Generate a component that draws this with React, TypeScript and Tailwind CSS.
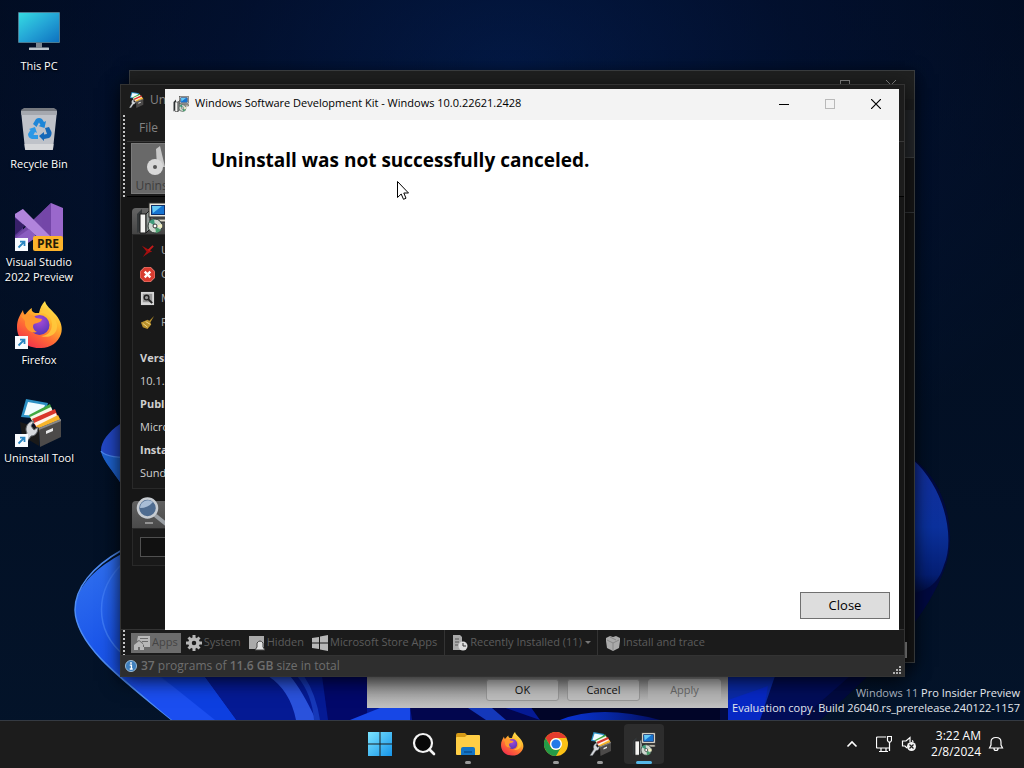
import type { ReactNode } from 'react';

const SEGOE = "font-['Open_Sans','Noto_Sans',sans-serif]";

function Wallpaper() {
  return (
    <svg className="absolute inset-0 h-full w-full" viewBox="0 0 1024 720" preserveAspectRatio="none" aria-hidden="true">
      <defs>
        <radialGradient id="sky" cx="0.5" cy="0.1" r="0.62">
          <stop offset="0" stopColor="#052668" />
          <stop offset="0.45" stopColor="#03153c" />
          <stop offset="1" stopColor="#020d1e" />
        </radialGradient>
        <linearGradient id="skyLow" x1="0" y1="0" x2="0" y2="1">
          <stop offset="0" stopColor="#010a1e" stopOpacity="0.5" />
          <stop offset="0.5" stopColor="#03122a" stopOpacity="0.5" />
          <stop offset="1" stopColor="#04162e" stopOpacity="0.7" />
        </linearGradient>
        <linearGradient id="petal" x1="0" y1="0" x2="1" y2="1">
          <stop offset="0" stopColor="#3b7df0" />
          <stop offset="0.35" stopColor="#1b56ea" />
          <stop offset="1" stopColor="#0c36dc" />
        </linearGradient>
        <linearGradient id="petalR" x1="0" y1="0" x2="0" y2="1">
          <stop offset="0" stopColor="#142f9a" />
          <stop offset="0.5" stopColor="#0b319c" />
          <stop offset="0.85" stopColor="#051f74" />
          <stop offset="1" stopColor="#020b38" />
        </linearGradient>
        <linearGradient id="stem" x1="0" y1="0" x2="1" y2="0">
          <stop offset="0" stopColor="#0a34d8" />
          <stop offset="0.5" stopColor="#0626a0" />
          <stop offset="1" stopColor="#030c5c" />
        </linearGradient>
      </defs>
      <rect width="1024" height="720" fill="url(#sky)" />
      <rect width="1024" height="720" fill="url(#skyLow)" />
      <path d="M120 424C108 432 101 442 101 450C102 458 112 470 120 482L240 560V400Z" fill="#2348c6" />
      <path d="M101 452Q104 457 130 458V490L120 482C112 470 104 462 101 452Z" fill="#1e63cf" />
      <path d="M101 451Q104 457 130 458" fill="none" stroke="#4a86ee" strokeWidth="1.5" />
      <path d="M220 520C130 540 76 572 75 610C76 645 120 678 172 720H420V520Z" fill="url(#petal)" />
      <path d="M122 550C92 567 75 588 75 610C76 645 120 678 172 720" fill="none" stroke="#4f8cf2" strokeWidth="1.5" />
      <path d="M124 562C94 590 94 630 124 655" fill="none" stroke="#3b78f6" strokeWidth="1.5" />
      <path d="M120 672C136 690 155 706 172 720H230L150 672Z" fill="#1b4ef0" />
      <path d="M204 676L236 720H720V676Z" fill="#051a94" />
      <path d="M160 676L215 720H236L204 676Z" fill="#0d3fe0" />
      <path d="M268 676Q290 690 296 720H316Q302 690 290 676Z" fill="#2a52dc" />
      <path d="M297 676Q312 694 314 720H320Q316 694 304 676Z" fill="#1638b8" />
      <path d="M322 676L328 720H367V676Z" fill="#02086a" />
      <path d="M350 720L380 708H410V720Z" fill="#1747e6" />
      <path d="M410 706H500L540 720H412Z" fill="#02064e" />
      <path d="M468 708L486 720H506L492 708Z" fill="#1438ba" />
      <path d="M530 706H728V720H540Z" fill="#010528" />
      <path d="M560 720Q600 704 660 720Z" fill="url(#stem)" />
      <path d="M915 460C950 488 957 540 944 570C930 610 890 660 820 720H720V660H900Z" fill="#020a40" />
      <path d="M912 459C946 488 955 540 944 565C938 585 926 592 905 595Z" fill="url(#petalR)" />
      <path d="M728 676H846L800 708L728 720Z" fill="#0a2aa6" />
      <path d="M728 700L768 686L762 720H728Z" fill="#0728c4" />
      <path d="M775 676L760 720H800L850 676Z" fill="#020d58" />
    </svg>
  );
}

function ShortcutArrow() {
  return (
    <g>
      <rect x="0" y="35" width="13" height="13" fill="#f8fbff" />
      <path d="M3.5 44.5L9 39M5 38.6H9.5V43" fill="none" stroke="#2a86c2" strokeWidth="1.8" />
    </g>
  );
}

function ThisPcIcon() {
  return (
    <svg viewBox="0 0 48 48" className="size-12" aria-hidden="true">
      <defs>
        <linearGradient id="screen" x1="0" y1="0" x2="1" y2="1">
          <stop offset="0" stopColor="#35dbe2" />
          <stop offset="0.5" stopColor="#24a5d6" />
          <stop offset="1" stopColor="#0e72c0" />
        </linearGradient>
      </defs>
      <rect x="3" y="5" width="42" height="31" rx="1" fill="#4b7b92" />
      <rect x="4" y="6" width="40" height="29" fill="url(#screen)" />
      <path d="M21 36H27V40.500H21Z" fill="#7c8690" />
      <rect x="14" y="40.500" width="20" height="2.500" rx="0.500" fill="#bcc5cc" />
    </svg>
  );
}

function RecycleBinIcon() {
  return (
    <svg viewBox="0 0 48 48" className="size-12" aria-hidden="true">
      <path d="M6 5L9 3H39L42 5L41 8H7Z" fill="#76797f" />
      <path d="M6 6H42L38 44Q38 45 37 45H11Q10 45 10 44Z" fill="#bfc2c9" />
      <path d="M6 6H42L41.500 10H6.500Z" fill="#a5a8af" />
      <path d="M9.500 39H38.500L38 44Q38 45 37 45H11Q10 45 10 44Z" fill="#d6d7da" />
      <path d="M18 19L21 14Q24 12 27 14L29 17L31 16L29.500 23L23.500 21L25.500 20L24 17.500L21.500 22Z" fill="#1e86d8" />
      <path d="M30 23L34 22L36.500 27Q37 31 34 33L29 34V36L24 31L29 27V29.500L32 29Z" fill="#1668b8" />
      <path d="M14 24L20 22L22 28L20 27L18.500 30H23V34H17Q13 33 13 29L15.500 25Z" fill="#2c98e6" />
    </svg>
  );
}

function VisualStudioIcon() {
  return (
    <svg viewBox="0 0 48 48" className="size-12" aria-hidden="true">
      <path d="M0 11L8 6L8 34L0 38Z" fill="#5c3a94" />
      <path d="M0 34L36 0V18L8 42H0Z" fill="#7448a8" />
      <path d="M36 0L48 5V46H34Z" fill="#9a68cc" />
      <path d="M36 0V46L27 34V9Z" fill="#7446a8" />
      <path d="M0 15L10 23L0 32Z" fill="#38206a" />
      <path d="M8 6L40 38L36 46L0 14V11Z" fill="#b184dc" />
      <path d="M0 36L14 26L22 34L10 42H0Z" fill="#8a5cc0" />
      <rect x="18" y="33" width="30" height="15" rx="2" fill="#fcb32b" />
      <text x="33" y="45" textAnchor="middle" fontSize="12" fontWeight="700" fill="#241b08" fontFamily="Open Sans, sans-serif">PRE</text>
      <ShortcutArrow />
    </svg>
  );
}

function FirefoxArt({ id }: { id: string }) {
  return (
    <g>
      <defs>
        <linearGradient id={id + 'a'} x1="0.8" y1="0" x2="0.2" y2="1">
          <stop offset="0" stopColor="#fff05a" />
          <stop offset="0.35" stopColor="#ffb52c" />
          <stop offset="0.65" stopColor="#ff6a35" />
          <stop offset="1" stopColor="#f0284e" />
        </linearGradient>
        <radialGradient id={id + 'b'} cx="0.5" cy="0.3" r="0.7">
          <stop offset="0" stopColor="#a84bd8" />
          <stop offset="1" stopColor="#5636b8" />
        </radialGradient>
      </defs>
      <path d="M30 0C31 5 36 8 41 14C46 20 48 27 46 33C43 42 34 48 24 47C11 47 2 38 2 26C2 19 5 14 8 9C8 11 9 13 10 14C12 11 15 8 17 7C16 10 18 11 20 12L24 12C25 7 27 3 30 0Z" fill={'url(#' + id + 'a)'} />
      <path d="M24 13C30 10 37 16 37 23C37 31 32 35 26 35C34 38 43 33 42 24C41 17 36 14 33 9C30 8 26 10 24 13Z" fill="#ffc93d" opacity="0.85" />
      <circle cx="24.500" cy="24" r="10" fill={'url(#' + id + 'b)'} />
      <path d="M6 15C12 12 18 13 21 17L27 18C27 21 22 22 19 23C17 25 18 29 22 31C16 33 9 28 10 20Z" fill="#ff982f" />
    </g>
  );
}

function CabinetArt() {
  return (
    <g>
      <path d="M11 0L33 4L28 20L6 18Z" fill="#2c90c4" />
      <path d="M13 3L30 6L26 17L9 16Z" fill="#f0fbff" />
      <path d="M14 16L35 5L38 13L18 24Z" fill="#42a842" />
      <path d="M15 18L36 8L39 15L19 25Z" fill="#f6f8e8" />
      <path d="M17 20L40 10L43 18L22 30Z" fill="#d9362b" />
      <path d="M19 24L41 14L43 20L24 31Z" fill="#fff2e8" />
      <path d="M21 27L43 16L46 22L25 33Z" fill="#f6b42a" />
      <path d="M5 23L24 29V47L7 37Z" fill="#191919" />
      <path d="M24 29L46 20V38L25 48Z" fill="#4c4a49" />
      <path d="M24 29L46 20V22L24 31Z" fill="#888" />
      <path d="M31 32L38 29V32L31 35Z" fill="#e8e8e8" />
      <path d="M4 47L12 34C9 29 13 22 19 22L16 27L19 31L23 28C23 34 20 37 16 37L9 47Z" fill="#d5d8dc" stroke="#65696e" strokeWidth="1" />
    </g>
  );
}

function InstallerIcon({ className }: { className: string }) {
  return (
    <svg viewBox="0 0 32 32" className={className} aria-hidden="true">
      <path d="M1 12L6 7V27L1 31Z" fill="#34383a" />
      <path d="M4 12H10V31H4Z" fill="#f4f4f2" stroke="#191919" />
      <path d="M10 12L14 8V27L10 31Z" fill="#8f9795" stroke="#191919" />
      <rect x="13" y="1" width="18" height="14" fill="#ece8da" stroke="#2b2b2b" />
      <rect x="15.500" y="3.500" width="13" height="9" fill="#1874d0" stroke="#123068" />
      <path d="M16 4H26L17 11Z" fill="#65c9f5" />
      <path d="M17 17H31V20H17Z" fill="#d9d5c6" stroke="#2b2b2b" />
      <circle cx="19" cy="24" r="7" fill="#cfd8d0" stroke="#2e3834" />
      <path d="M19 24L13 20A7 7 0 0 1 18 17Z" fill="#3f9b7b" />
      <path d="M19 24L25 28A7 7 0 0 1 20 31Z" fill="#4ba06f" />
      <path d="M19 24L26 22A7 7 0 0 1 26 26Z" fill="#f2efbe" />
      <circle cx="19" cy="24" r="2" fill="#fff" stroke="#333" />
    </svg>
  );
}

function DesktopIcon({ label, children }: { label: string; children: ReactNode }) {
  return (
    <button type="button" className="flex h-[98px] w-[78px] flex-col items-center pt-[7px] text-[11px]/[15px] text-white">
      {children}
      <span className="mt-[3px] [text-shadow:0_1px_2px_#000]">{label}</span>
    </button>
  );
}

function Desktop() {
  return (
    <nav aria-label="Desktop" className="relative flex w-[78px] flex-col">
      <DesktopIcon label="This PC"><ThisPcIcon /></DesktopIcon>
      <DesktopIcon label="Recycle Bin"><RecycleBinIcon /></DesktopIcon>
      <DesktopIcon label="Visual Studio 2022 Preview"><VisualStudioIcon /></DesktopIcon>
      <DesktopIcon label="Firefox">
        <svg viewBox="0 0 48 48" className="size-12" aria-hidden="true"><FirefoxArt id="fxDesk" /><ShortcutArrow /></svg>
      </DesktopIcon>
      <DesktopIcon label="Uninstall Tool">
        <svg viewBox="0 0 48 48" className="size-12" aria-hidden="true"><CabinetArt /><ShortcutArrow /></svg>
      </DesktopIcon>
    </nav>
  );
}

function BackWindow() {
  return (
    <section className="absolute top-[70px] left-[129px] flex h-[593px] w-[786px] flex-col border border-[#3a3d3f] bg-[#161616] text-[#8a8a8a] shadow-[0_4px_16px_#000a]">
      <div className="flex h-7 justify-end bg-[#1f2020]">
        <div className="grid w-[46px] place-items-center">
          <svg viewBox="0 0 10 10" className="size-[10px]" aria-hidden="true"><rect x="0.500" y="0.500" width="9" height="9" fill="none" stroke="currentColor" /></svg>
        </div>
        <div className="grid w-[46px] place-items-center">
          <svg viewBox="0 0 10 10" className="size-[10px]" aria-hidden="true"><path d="M0 0L10 10M10 0L0 10" stroke="currentColor" /></svg>
        </div>
      </div>
      <div className="h-[11px] bg-[#1c1d1e]" />
      <div className="h-12 border-b border-[#3a3d3f] bg-[#24272a]" />
      <div className="h-[55px] border-b border-[#34373a] bg-[#161617]" />
      <div className="flex flex-1 items-end justify-end bg-[#151515] pr-[7px] pb-1">
        <div className="h-4 w-10 border-2 border-[#8c8c8c]" />
      </div>
    </section>
  );
}

function PropertiesWindow() {
  const base = 'h-[22px] w-[73px] rounded-[3px] border text-[11px]/[18px]';
  return (
    <section className="absolute top-[400px] left-[367px] flex h-[308px] w-[361px] items-end justify-end gap-2 bg-linear-to-b from-[#888888] from-90% to-[#c2c2c2] px-[7px] pb-[7px]">
      <button type="button" className={base + ' border-[#969696] bg-[#bdbdbd] text-[#111]'}>OK</button>
      <button type="button" className={base + ' border-[#969696] bg-[#bdbdbd] text-[#111]'}>Cancel</button>
      <button type="button" className={base + ' border-[#b5b5b5] bg-[#b5b5b5] text-[#6a6a6a]'}>Apply</button>
    </section>
  );
}

function Gripper() {
  return (
    <span className="mx-[2px] w-[2px] shrink-0 self-stretch bg-[repeating-linear-gradient(to_bottom,#c4c4c4_0_2px,transparent_2px_4px)]" />
  );
}

function SideAction({ label, children }: { label: string; children: ReactNode }) {
  return (
    <li>
      <button type="button" className="flex h-6 items-center gap-[6px] pl-[7px]">
        <svg viewBox="0 0 16 16" className="size-[15px]" aria-hidden="true">{children}</svg>
        {label}
      </button>
    </li>
  );
}

function Sidebar() {
  return (
    <aside className="flex w-[220px] flex-col gap-3 pt-[11px] pl-[11px] text-[11px] text-[#b0b0b0]">
      <div>
        <div className="flex h-[26px] items-end rounded-tl-sm bg-linear-to-b from-[#656565] to-[#454545]">
          <InstallerIcon className="ml-1 size-8 shrink-0" />
        </div>
        <div className="border border-[#292929] bg-[#191919] pt-[3px] pb-1">
          <ul>
            <SideAction label="Uninstall">
              <path d="M2 3L13 9L10 10L3 15L7 9Z" fill="#a50f0f" /><path d="M9 8L14 3" stroke="#c61a1a" strokeWidth="2" />
            </SideAction>
            <SideAction label="Cancel">
              <path d="M5 0H11L16 5V11L11 16H5L0 11V5Z" fill="#d83c30" stroke="#f08a80" /><path d="M5 5L11 11M11 5L5 11" stroke="#fff" strokeWidth="2.5" />
            </SideAction>
            <SideAction label="Modify">
              <rect x="1" y="1" width="14" height="14" fill="#d6d6d6" /><rect x="3" y="3" width="10" height="9" fill="#979797" /><circle cx="7" cy="7" r="2.500" fill="none" stroke="#222" strokeWidth="1.5" /><path d="M9 9L13 13" stroke="#222" strokeWidth="2" />
            </SideAction>
            <SideAction label="Registry">
              <path d="M15 1L10 6L8 5L1 8L3 13L8 15L12 10L11 8Z" fill="#b9912c" /><path d="M3 9L8 13M6 7L11 10" stroke="#f0d88a" />
            </SideAction>
          </ul>
          <dl className="mt-3 pl-[7px] leading-[23px] text-[#cfcfcf]">
            <dt className="font-bold">Version:</dt>
            <dd>10.1.22621</dd>
            <dt className="font-bold">Publisher:</dt>
            <dd>Microsoft</dd>
            <dt className="font-bold">Installed:</dt>
            <dd>Sunday</dd>
          </dl>
        </div>
      </div>
      <div>
        <div className="flex h-[27px] items-end rounded-tl-sm bg-linear-to-b from-[#606060] to-[#4a4a4a]">
          <svg viewBox="0 0 32 32" className="ml-1 size-8 shrink-0" aria-hidden="true">
            <path d="M20 20L30 28" stroke="#9ba0a5" strokeWidth="4" strokeLinecap="round" />
            <circle cx="11.500" cy="12" r="9.500" fill="#4f6c90" stroke="#c7ccd2" strokeWidth="2.500" />
            <path d="M4 12A8 8 0 0 1 17 6Q12 12 4 12Z" fill="#a8bdd6" />
            <path d="M9 27H17" stroke="#aaa" strokeWidth="1.5" />
          </svg>
        </div>
        <div className="border border-[#292929] bg-[#191919] px-[7px] py-2">
          <input aria-label="Search" className="block h-5 w-full border border-[#505050] bg-[#111]" />
        </div>
      </div>
    </aside>
  );
}

function FilterTab({ label, icon, active }: { label: string; icon: ReactNode; active?: boolean }) {
  return (
    <button type="button" className={'flex h-5 items-center gap-[2px] px-[3px] ' + (active ? 'bg-[#6c6c6c] text-[#444]' : 'text-[#5c5c5c]')}>
      <svg viewBox="0 0 16 16" className="size-4 text-[#b8b8b8]" aria-hidden="true">{icon}</svg>
      {label}
    </button>
  );
}

function UninstallToolWindow() {
  return (
    <section className="absolute top-[84px] left-[120px] flex h-[593px] w-[785px] flex-col border border-[#333] bg-[#161616] text-[11px] text-[#6e6e6e] shadow-[0_4px_18px_#000b]">
      <header className="flex h-[30px] items-center gap-[6px] bg-[#1c1c1c] pl-[7px]">
        <svg viewBox="0 0 48 48" className="size-4" aria-hidden="true"><CabinetArt /></svg>
        <span className="max-w-10 truncate text-xs text-[#858585]">Uninstall Tool</span>
      </header>
      <div className="flex bg-[#1c1c1c]">
        <Gripper />
        <div className="flex-1">
          <div className="flex h-[27px] items-center border-b border-[#383838] pl-3">
            <button type="button" className="text-xs text-[#838383]">File</button>
          </div>
          <div className="flex h-[55px] items-start border-b border-black pt-[1px] pl-1">
            <button type="button" className="flex h-[51px] w-[58px] flex-col items-center justify-end border border-[#7a7a7a] bg-[#696969] text-[#3e3e3e]">
              <svg viewBox="0 0 36 36" className="size-9 shrink-0" aria-hidden="true">
                <path d="M14 6L18 3L23 24H15Z" fill="#c8c8c8" />
                <circle cx="13" cy="24" r="8" fill="#d8d8d8" /><circle cx="13" cy="24" r="2" fill="#555" />
              </svg>
              <span className="text-xs/[14px]">Uninstall</span>
            </button>
          </div>
        </div>
      </div>
      <div className="flex-1"><Sidebar /></div>
      <div className="flex h-[27px] shrink-0 items-center border-y border-[#333] bg-[#1b1b1b]">
        <Gripper />
        <div className="ml-1 flex items-center gap-[2px]">
          <FilterTab active label="Apps" icon={<path d="M4 1H16V12H9V8L5 5L3 6ZM0 10L5 6L10 10V15H6V12H4V15H0ZM6 3V4H14V3ZM8 6V7H14V6Z" fill="currentColor" fillRule="evenodd" />} />
          <FilterTab label="System" icon={<g stroke="currentColor"><circle cx="8" cy="8" r="4" fill="none" strokeWidth="3.500" /><path d="M8 0V3M8 13V16M0 8H3M13 8H16M2.500 2.500L4.500 4.500M11.500 11.500L13.500 13.500M2.500 13.500L4.500 11.500M11.500 4.500L13.500 2.500" strokeWidth="3" /></g>} />
          <FilterTab label="Hidden" icon={<g><path d="M0 1H15V12H10V14H0Z" fill="#aaa" /><path d="M8 8Q11 4 14 8V12L16 15H6L8 12Z" fill="#e0e0e0" stroke="#444" /></g>} />
          <FilterTab label="Microsoft Store Apps" icon={<path d="M0 3L7 2V7.500H0ZM8 1.500L16 0V7.500H8ZM0 8.500H7V14L0 13ZM8 8.500H16V16L8 14.500Z" fill="currentColor" />} />
        </div>
        <div className="ml-1 flex items-center border-x border-[#333] py-1 pr-[6px] pl-1">
          <FilterTab label="Recently Installed (11)" icon={<g><path d="M1 0H8L10 2V15H1Z" fill="#aaa" /><path d="M3 4H7M3 7H7M3 10H6" stroke="#555" /><circle cx="11" cy="11" r="4.500" fill="#ddd" /><path d="M11 8V11H14" fill="none" stroke="#333" /></g>} />
          <svg viewBox="0 0 6 4" className="h-1 w-[6px]" aria-hidden="true"><path d="M0 0H6L3 3Z" fill="#777" /></svg>
        </div>
        <div className="pl-1">
          <FilterTab label="Install and trace" icon={<g><path d="M1 3L5 1L8 2L11 1L15 3V6L14 13L8 16L2 13L1 6Z" fill="#aaa" /><path d="M2 5L8 8L14 5M8 8V15M5 2L11 5" fill="none" stroke="#888" /></g>} />
        </div>
      </div>
      <footer className="flex h-[20px] shrink-0 items-center bg-[#2e2e2e] pr-[2px] pl-1 text-xs">
        <svg viewBox="0 0 14 14" className="size-3" aria-hidden="true">
          <circle cx="7" cy="7" r="6.500" fill="#3f7fbd" stroke="#a5c4df" /><path d="M5.500 6H7.500V10M5.500 10.500H9M6 3.500H8" fill="none" stroke="#fff" strokeWidth="1.5" />
        </svg>
        <span className="ml-1"><b className="font-semibold">37</b> programs of <b className="font-semibold">11.6 GB</b> size in total</span>
        <svg viewBox="0 0 9 9" className="mt-2 ml-auto size-[9px]" aria-hidden="true">
          <path d="M6 0H8V2H6ZM3 3H5V5H3ZM6 3H8V5H6ZM0 6H2V8H0ZM3 6H5V8H3ZM6 6H8V8H6Z" fill="#b0b0b0" />
        </svg>
      </footer>
    </section>
  );
}

function SdkWindow() {
  const caption = 'grid h-full w-[46px] place-items-center';
  return (
    <section className="absolute top-[89px] left-[165px] flex h-[541px] w-[734px] flex-col bg-white text-black">
      <header className="flex h-[31px] shrink-0 items-center bg-[#f3f3f3] pb-[2px] pl-2">
        <InstallerIcon className="size-4" />
        <h1 className="ml-[6px] flex-1 text-[11px]">Windows Software Development Kit - Windows 10.0.22621.2428</h1>
        <button type="button" aria-label="Minimize" className={caption}>
          <svg viewBox="0 0 10 10" className="size-[10px]" aria-hidden="true"><path d="M0 5.500H10" stroke="#000" /></svg>
        </button>
        <button type="button" aria-label="Maximize" disabled className={caption}>
          <svg viewBox="0 0 10 10" className="size-[10px]" aria-hidden="true"><rect x="0.500" y="0.500" width="9" height="9" fill="none" stroke="#b9b9b9" /></svg>
        </button>
        <button type="button" aria-label="Close window" className={caption}>
          <svg viewBox="0 0 10 10" className="size-[10px]" aria-hidden="true"><path d="M0 0L10 10M10 0L0 10" stroke="#000" strokeWidth="1.2" /></svg>
        </button>
      </header>
      <main className="flex flex-1 flex-col justify-between pt-[26px] pr-[9px] pb-[11px] pl-[46px]">
        <h2 className="text-[19px]/7 font-bold">Uninstall was not successfully canceled.</h2>
        <button type="button" className="h-[27px] w-[90px] self-end border border-[#707070] bg-[#dddddd] text-[13px]">Close</button>
      </main>
    </section>
  );
}

function TaskButton({ label, state, children }: { label: string; state?: 'open' | 'active'; children: ReactNode }) {
  return (
    <button type="button" aria-label={label} className={'relative grid size-10 place-items-center rounded-sm ' + (state === 'active' ? 'bg-[#2d2d2d]' : '')}>
      {children}
      {state === 'open' && <span className="absolute bottom-0 h-[3px] w-[6px] rounded-full bg-[#9a9a9a]" />}
      {state === 'active' && <span className="absolute bottom-0 h-[3px] w-4 rounded-full bg-[#55b8e8]" />}
    </button>
  );
}

function Taskbar() {
  return (
    <footer className="relative grid h-12 shrink-0 grid-cols-[1fr_auto_1fr] items-center border-t border-[#343a42] bg-[#1c1c1c] pb-[2px] text-white">
      <div />
      <div className="flex gap-1">
        <TaskButton label="Start">
          <svg viewBox="0 0 24 24" className="size-6" aria-hidden="true">
            <defs><linearGradient id="win" x1="0" y1="0" x2="1" y2="1"><stop offset="0" stopColor="#7be4ff" /><stop offset="1" stopColor="#1694e8" /></linearGradient></defs>
            <path d="M0 0H11.500V11.500H0ZM12.500 0H24V11.500H12.500ZM0 12.500H11.500V24H0ZM12.500 12.500H24V24H12.500Z" fill="url(#win)" />
          </svg>
        </TaskButton>
        <TaskButton label="Search">
          <svg viewBox="0 0 24 24" className="size-6" aria-hidden="true"><circle cx="11" cy="11" r="9" fill="#080808" stroke="#f4f4f4" strokeWidth="2.200" /><path d="M17.500 17.500L22 22" stroke="#f4f4f4" strokeWidth="2.600" strokeLinecap="round" /></svg>
        </TaskButton>
        <TaskButton label="File Explorer" state="open">
          <svg viewBox="0 0 24 24" className="size-6" aria-hidden="true">
            <path d="M0 3Q0 1 2 1H9L12 4H22V10H0Z" fill="#d69a16" />
            <path d="M0 6Q0 5 1 5H9L11 3H23Q24 3 24 4V22Q24 23 23 23H1Q0 23 0 22Z" fill="#ffce45" />
            <path d="M5 23V17Q5 15 7 15H17Q19 15 19 17V23Z" fill="#1474c4" /><path d="M8 20H16" stroke="#0b579d" strokeWidth="2" />
          </svg>
        </TaskButton>
        <TaskButton label="Firefox"><svg viewBox="0 0 48 48" className="size-6" aria-hidden="true"><FirefoxArt id="fxTask" /></svg></TaskButton>
        <TaskButton label="Google Chrome" state="open">
          <svg viewBox="0 0 24 24" className="size-6" aria-hidden="true">
            <circle cx="12" cy="12" r="12" fill="#fbc116" />
            <path d="M1.600 6A12 12 0 0 1 22.400 6H12A6 6 0 0 0 6.800 15Z" fill="#e33b2e" />
            <path d="M1.600 6A12 12 0 0 0 12 24L17.200 15A6 6 0 0 1 6.800 15Z" fill="#249a48" />
            <circle cx="12" cy="12" r="6" fill="#fff" /><circle cx="12" cy="12" r="4.600" fill="#2478e8" />
          </svg>
        </TaskButton>
        <TaskButton label="Uninstall Tool" state="open"><svg viewBox="0 0 48 48" className="size-6" aria-hidden="true"><CabinetArt /></svg></TaskButton>
        <TaskButton label="Windows Software Development Kit" state="active"><InstallerIcon className="size-6" /></TaskButton>
      </div>
      <div className="flex items-center justify-end pr-5">
        <button type="button" aria-label="Show hidden icons" className="mr-[18px]">
          <svg viewBox="0 0 12 12" className="size-3" aria-hidden="true"><path d="M1.500 8.500L6 4L10.500 8.500" fill="none" stroke="currentColor" strokeWidth="1.600" /></svg>
        </button>
        <button type="button" aria-label="Network" className="mr-[9px]">
          <svg viewBox="0 0 16 16" className="size-4" aria-hidden="true"><path d="M10 1H1.500Q0.500 1 0.500 2V11Q0.500 12 1.500 12H13.500V7M5 12V15M10 12V15M3 15.500H12M11.500 0.500H15.500V4.500L14.500 6H12.500L11.500 4.500ZM13.500 6V15" fill="none" stroke="currentColor" strokeWidth="1.200" /></svg>
        </button>
        <button type="button" aria-label="Volume muted" className="mr-[14px]">
          <svg viewBox="0 0 16 16" className="size-4" aria-hidden="true"><path d="M9 6V1.500L5 5H1.500V10H4L6 12M11 4.500Q12 5 12 6" fill="none" stroke="currentColor" strokeWidth="1.200" /><circle cx="10.500" cy="10.500" r="4.500" fill="#f4f4f4" /><path d="M8.500 8.500L12.500 12.500M12.500 8.500L8.500 12.500" stroke="#222" strokeWidth="1.200" /></svg>
        </button>
        <button type="button" className="mr-[7px] flex flex-col text-right text-xs/4"><span>3:22 AM</span><span>2/8/2024</span></button>
        <button type="button" aria-label="Notifications">
          <svg viewBox="0 0 16 16" className="size-4" aria-hidden="true"><path d="M1.500 12L3 9V6Q3 1.500 8 1.500Q13 1.500 13 6V9L14.500 12ZM6 12.500Q6 14.500 8 14.500Q10 14.500 10 12.500" fill="none" stroke="currentColor" strokeWidth="1.200" /></svg>
        </button>
      </div>
    </footer>
  );
}

export default function App() {
  return (
    <div className={'flex min-h-screen flex-col overflow-hidden bg-[#020d20] ' + SEGOE}>
      <div className="relative flex-1 overflow-hidden">
        <Wallpaper />
        <Desktop />
        <BackWindow />
        <PropertiesWindow />
        <UninstallToolWindow />
        <SdkWindow />
        <p className="absolute right-1 bottom-[5px] text-right text-[11px]/[15px] text-[#e4e8ee]">
          <span className="text-[#a4adba]">Windows 11</span> Pro Insider Preview<br />
          Evaluation copy. Build 26040.rs_prerelease.240122-1157
        </p>
        <svg viewBox="0 0 12 19" className="absolute top-[181px] left-[397px] h-[19px] w-3" aria-hidden="true">
          <path d="M0.500 0.500V16.500L4.200 13L6.500 18.300L9 17.200L6.800 12H11.500Z" fill="#fff" stroke="#000" />
        </svg>
      </div>
      <Taskbar />
    </div>
  );
}
